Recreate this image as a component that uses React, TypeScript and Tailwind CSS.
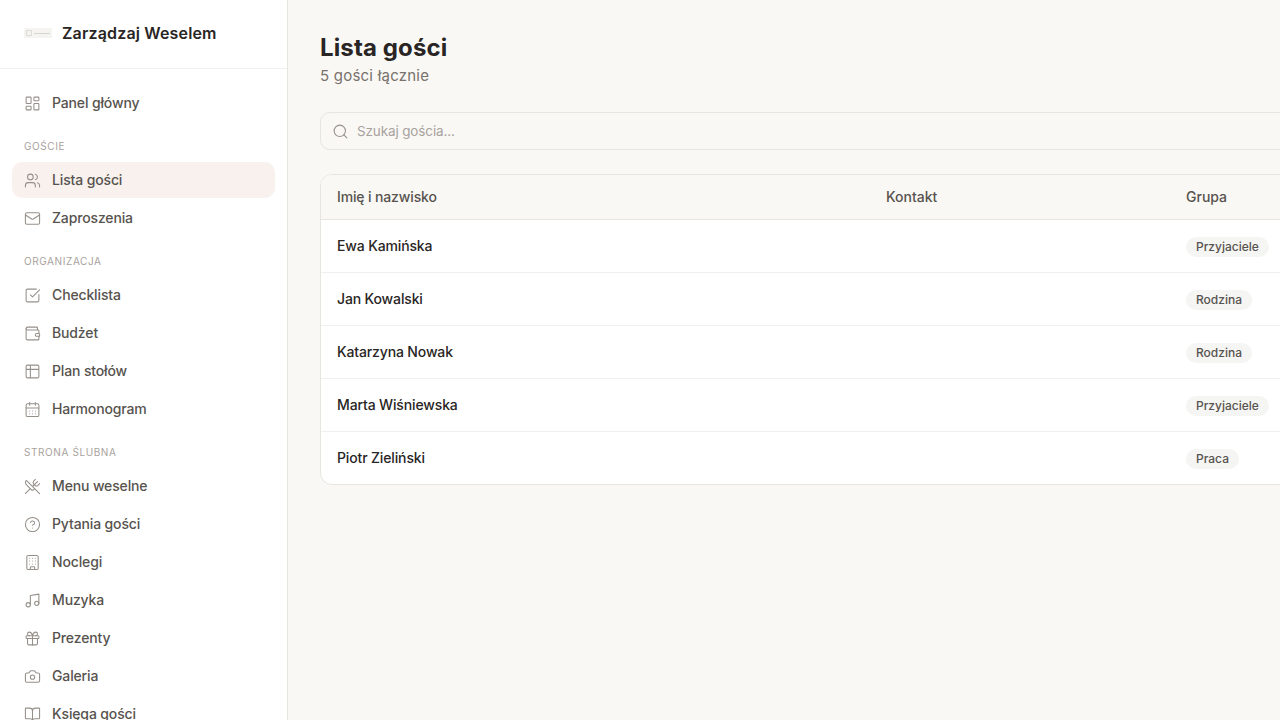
import {
  BookOpen,
  Building,
  CalendarDays,
  Camera,
  CircleHelp,
  Gift,
  LayoutDashboard,
  Mail,
  Music,
  Search,
  SquareCheckBig,
  Table2,
  Users,
  UtensilsCrossed,
  Wallet,
} from 'lucide-react';
import type { LucideIcon } from 'lucide-react';

interface NavItem {
  label: string;
  icon: LucideIcon;
  active?: boolean;
}

interface NavSection {
  title?: string;
  items: NavItem[];
}

const sections: NavSection[] = [
  { items: [{ label: 'Panel główny', icon: LayoutDashboard }] },
  {
    title: 'Goście',
    items: [
      { label: 'Lista gości', icon: Users, active: true },
      { label: 'Zaproszenia', icon: Mail },
    ],
  },
  {
    title: 'Organizacja',
    items: [
      { label: 'Checklista', icon: SquareCheckBig },
      { label: 'Budżet', icon: Wallet },
      { label: 'Plan stołów', icon: Table2 },
      { label: 'Harmonogram', icon: CalendarDays },
    ],
  },
  {
    title: 'Strona ślubna',
    items: [
      { label: 'Menu weselne', icon: UtensilsCrossed },
      { label: 'Pytania gości', icon: CircleHelp },
      { label: 'Noclegi', icon: Building },
      { label: 'Muzyka', icon: Music },
      { label: 'Prezenty', icon: Gift },
      { label: 'Galeria', icon: Camera },
      { label: 'Księga gości', icon: BookOpen },
    ],
  },
];

const guests = [
  { name: 'Ewa Kamińska', group: 'Przyjaciele' },
  { name: 'Jan Kowalski', group: 'Rodzina' },
  { name: 'Katarzyna Nowak', group: 'Rodzina' },
  { name: 'Marta Wiśniewska', group: 'Przyjaciele' },
  { name: 'Piotr Zieliński', group: 'Praca' },
];

function Sidebar() {
  return (
    <aside className="w-[288px] h-full shrink-0 bg-white border-r border-[#e7e5e0] overflow-hidden">
      <div className="h-[69px] flex items-center gap-[10px] pl-6 pb-[2px] border-b border-[#f1f0ed]">
        <div className="w-7 h-[10px] bg-[#f5f4f1] flex items-center pl-[2px] gap-[2px]">
          <div className="w-[6px] h-[6px] border border-[#dcdcd8]" />
          <div className="w-4 h-px bg-[#d5d5d2]" />
        </div>
        <span className="text-base font-semibold tracking-[0.01em] text-[#292524]">Zarządzaj Weselem</span>
      </div>
      <nav className="px-3 pt-4">
        {sections.map((section, i) => (
          <div key={i} className={section.title ? 'mt-[18px]' : ''}>
            {section.title && (
              <h3 className="px-3 mb-2 h-[15px] leading-[15px] text-[10px] font-normal uppercase tracking-[0.06em] text-[#a8a29e]">
                {section.title}
              </h3>
            )}
            <ul className="flex flex-col gap-[2px]">
              {section.items.map((item) => (
                <li
                  key={item.label}
                  className={`h-9 flex items-center gap-[11px] px-3 rounded-[10px] text-sm font-[450] tracking-[-0.01em] text-[#57534e] ${
                    item.active ? 'bg-[#f8f1ee]' : ''
                  }`}
                >
                  <item.icon size={17} strokeWidth={1.5} className="text-[#96908a] shrink-0" />
                  {item.label}
                </li>
              ))}
            </ul>
          </div>
        ))}
      </nav>
    </aside>
  );
}

export default function App() {
  return (
    <div
      className="h-screen w-[1280px] flex overflow-hidden bg-[#f9f8f5]"
      style={{ fontFamily: 'Inter, "Noto Sans", sans-serif' }}
    >
      <Sidebar />
      <main className="flex-1 min-w-0 overflow-hidden pt-8 pl-8">
        <div className="w-[1200px]">
          <h1 className="h-8 leading-8 text-2xl font-bold tracking-[0.005em] text-[#292524]">Lista gości</h1>
          <p className="h-6 leading-6 text-[15px] tracking-[0.015em] text-[#78716c]">5 gości łącznie</p>
          <div className="mt-6 h-[38px] flex items-center gap-2 pl-[11px] border border-[#e7e5e0] rounded-[10px]">
            <Search size={17} strokeWidth={1.5} className="text-[#96908a]" />
            <span className="text-[13.5px] tracking-[-0.01em] text-[#a8a29e]">Szukaj gościa...</span>
          </div>
          <div className="mt-6 border border-[#e7e5e0] rounded-xl overflow-hidden bg-white">
            <div className="h-[45px] flex items-center px-4 bg-[#f9f8f5] border-b border-[#e7e5e0] text-sm font-[450] text-[#57534e]">
              <div className="w-[549px] tracking-[-0.01em]">Imię i nazwisko</div>
              <div className="w-[300px]">Kontakt</div>
              <div>Grupa</div>
            </div>
            {guests.map((guest, i) => (
              <div
                key={guest.name}
                className={`flex items-center px-4 ${
                  i < guests.length - 1 ? 'h-[53px] border-b border-[#f1f0ed]' : 'h-[52px]'
                }`}
              >
                <div className="w-[849px] text-sm font-medium tracking-[-0.01em] text-[#292524]">{guest.name}</div>
                <span className="h-5 leading-5 mt-[1px] px-[10px] rounded-full bg-[#f5f5f4] text-xs font-[450] text-[#57534e]">
                  {guest.group}
                </span>
              </div>
            ))}
          </div>
        </div>
      </main>
    </div>
  );
}
